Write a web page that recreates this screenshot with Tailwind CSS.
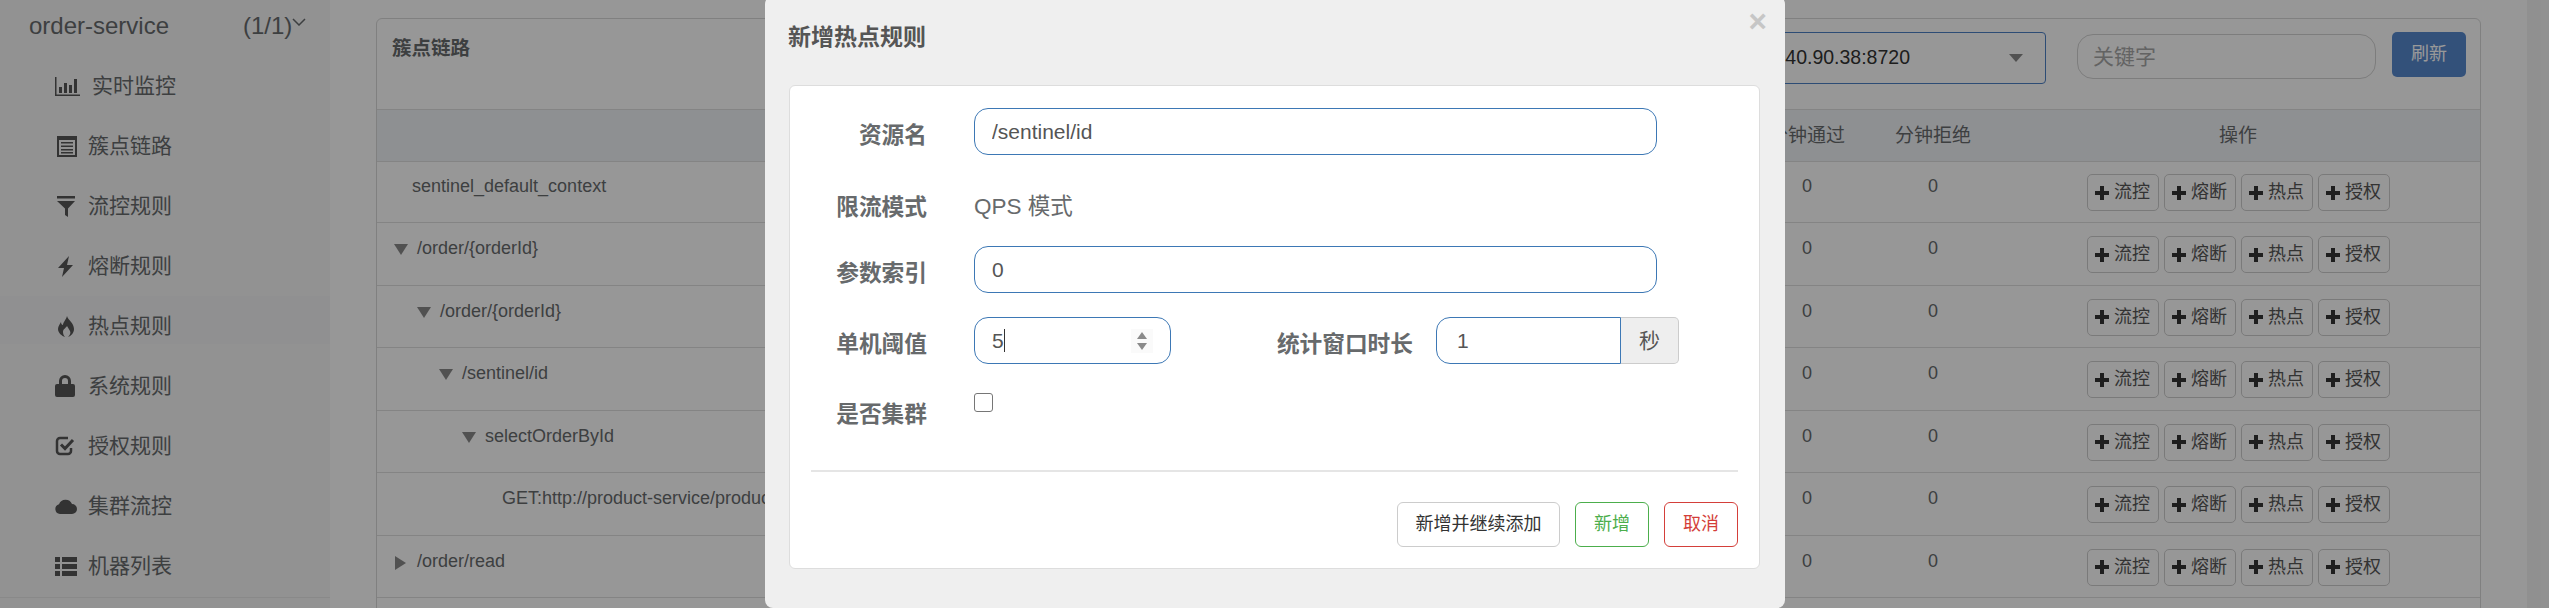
<!DOCTYPE html>
<html lang="zh-CN">
<head>
    <meta charset="UTF-8">
    <title>新增热点规则</title>
    <script src="https://cdn.jsdelivr.net/npm/@tailwindcss/browser@4"></script>
</head>
<body class="font-['Liberation_Sans','Noto_Sans_CJK_SC',sans-serif] text-[#676a6c]">
<div class="relative flex h-[608px] w-[2549px] overflow-hidden bg-[#fcfcfc]">

    <!-- Sidebar -->
    <aside class="h-[608px] w-[330px] shrink-0 bg-[#f3f3f4]">
        <div class="flex h-[56px] items-start pl-[29px] pt-[12px] text-[24px] leading-[28px]">
            <span class="w-[214px]">order-service</span>
            <span>(1/1)</span>
            <svg class="mt-[6px]" width="14" height="8" viewBox="0 0 14 8" fill="none" stroke="#676a6c" stroke-width="1.5"><path d="M1 1l6 6 6-6"/></svg>
        </div>
        <nav class="h-[542px] border-b border-[#e4e4e4] text-[21px] leading-[30px]">
            <a class="flex h-[60px] items-center pl-[55px]">
                <svg class="mr-[12px] text-[#555]" width="25" height="19" viewBox="0 0 25 19" fill="currentColor"><path d="M0 0h1.5v17.5H25V19H0z"/><path d="M4 10h3v6H4zM9 6h3v10H9zM14 8h3v8h-3zM19 2h3v14h-3z"/></svg>
                <span>实时监控</span>
            </a>
            <a class="flex h-[60px] items-center pl-[57px]">
                <svg class="mr-[11px] text-[#555]" width="20" height="21" viewBox="0 0 20 21" fill="currentColor"><path fill-rule="evenodd" d="M0 0h20v21H0zM2 4v15h16V4z"/><path d="M4 6h12v1.6H4zM4 9.5h12v1.6H4zM4 13h12v1.6H4zM4 16h12v1.4H4z"/></svg>
                <span>簇点链路</span>
            </a>
            <a class="flex h-[60px] items-center pl-[57px]">
                <svg class="mr-[13px] text-[#555]" width="18" height="21" viewBox="0 0 18 21" fill="currentColor"><path d="M0 0h18v2.5H0zM0 5h18l-7 7.5V21l-3-2v-6.5z"/></svg>
                <span>流控规则</span>
            </a>
            <a class="flex h-[60px] items-center pl-[58px]">
                <svg class="mr-[15px] text-[#555]" width="15" height="21" viewBox="0 0 15 21" fill="currentColor"><path d="M11 0L0 12h6L4 21 15 9H9z"/></svg>
                <span>熔断规则</span>
            </a>
            <a class="relative flex h-[60px] items-center pl-[57px]">
                <span class="absolute inset-x-0 bottom-[12px] top-0 bg-[#f1f1f2]"></span>
                <svg class="relative mr-[13px] text-[#555]" width="18" height="21" viewBox="0 0 18 21" fill="currentColor"><path d="M10 0c1 4 7 7 7 13 0 4-3 7-6 8 2-2 3-4 2-6-1-2-2-3-3-5-1 2-4 3-4 6 0 2 1 4 2 5-3-1-7-4-7-8 0-3 2-5 3-7 0 2 1 3 2 3 0-3 3-5 4-9z"/></svg>
                <span class="relative">热点规则</span>
            </a>
            <a class="flex h-[60px] items-center pl-[55px]">
                <svg class="mr-[13px] text-[#555]" width="20" height="22" viewBox="0 0 20 22" fill="currentColor"><path d="M2 9h2V6a6 6 0 0 1 12 0v3h2a2 2 0 0 1 2 2v9a2 2 0 0 1-2 2H2a2 2 0 0 1-2-2v-9a2 2 0 0 1 2-2zm5 0h6V6a3 3 0 0 0-6 0z"/></svg>
                <span>系统规则</span>
            </a>
            <a class="flex h-[60px] items-center pl-[55px]">
                <svg class="mr-[13px] text-[#555]" width="20" height="20" viewBox="0 0 20 20" fill="none" stroke="currentColor"><path stroke-width="2.5" d="M16 12v3a3 3 0 0 1-3 3H5a3 3 0 0 1-3-3V5a3 3 0 0 1 3-3h8"/><path stroke-width="3" d="M6 8.5l4 4 8-8.5"/></svg>
                <span>授权规则</span>
            </a>
            <a class="flex h-[60px] items-center pl-[55px]">
                <svg class="mr-[11px] text-[#555]" width="22" height="15" viewBox="0 0 22 15" fill="currentColor"><path d="M5 15a5 5 0 0 1-1-9.8A7 7 0 0 1 17 5a5 5 0 0 1 0 10z"/></svg>
                <span>集群流控</span>
            </a>
            <a class="flex h-[60px] items-center pl-[55px]">
                <svg class="mr-[11px] text-[#555]" width="22" height="19" viewBox="0 0 22 19" fill="currentColor"><path d="M0 0h5v5H0zM7 0h15v5H7zM0 7h5v5H0zM7 7h15v5H7zM0 14h5v5H0zM7 14h15v5H7z"/></svg>
                <span>机器列表</span>
            </a>
        </nav>
    </aside>

    <!-- Main content -->
    <main class="w-[2197px] px-[46px] pt-[18px]">
        <div class="h-[700px] rounded-t-[6px] border border-[#d6d6d6] bg-[#fcfcfc]">
            <div class="flex h-[90px] items-start pt-[13px]">
                <h2 class="ml-[15px] text-[19.5px] font-bold leading-[32px]">簇点链路</h2>
                <div class="ml-auto flex h-[52px] w-[420px] items-center justify-end rounded-[4px] border border-[#4b7fc4] bg-[#fcfcfc] pr-[22px] text-[19.5px] text-[#333]">
                    <span class="mr-[99px]">40.90.38:8720</span>
                    <svg width="14" height="8" viewBox="0 0 14 8" fill="#888"><path d="M0 0h14L7 8z"/></svg>
                </div>
                <input class="ml-[31px] mt-[2px] h-[45px] w-[299px] rounded-[16px] border border-[#d0d0d0] bg-transparent px-[15px] text-[21px] placeholder:text-[#a5a5a5]" placeholder="关键字">
                <button class="ml-[16px] h-[45px] w-[74px] rounded-[5px] bg-[#5688cc] text-[18px] text-white">刷新</button>
                <span class="w-[14px]"></span>
            </div>
            <div class="flex h-[53px] items-center border-y border-[#dcdcdc] bg-[#edf0f4] pt-[2px] text-[19px]">
                <div class="flex-1"></div>
                <div class="w-[126px] text-center">分钟通过</div>
                <div class="w-[126px] text-center">分钟拒绝</div>
                <div class="w-[484px] text-center">操作</div>
            </div>
            <div id="rows"></div>
        </div>
    </main>

    <div class="w-[22px] shrink-0 bg-[#f1f1f1]"></div>

    <!-- Backdrop -->
    <div class="absolute inset-0 bg-black/40"></div>

    <!-- Dialog -->
    <section class="absolute left-[765px] top-[-4px] h-[612px] w-[1020px] rounded-[8px] bg-[#efefef] pl-[24px] pt-[89px]">
        <h1 class="absolute left-[23px] top-[27px] text-[23px] font-bold leading-[28px] text-[#555]">新增热点规则</h1>
        <span class="absolute right-[18px] top-[5px] text-[31.5px] font-bold leading-[40px] text-[#c6c6c6]">×</span>

        <div class="h-[484px] w-[971px] rounded-[6px] border border-[#dddddd] bg-white pt-[22px]">
            <div class="mb-[26px] flex h-[47px] items-center">
                <label class="w-[137px] pt-[8px] text-right text-[22.7px] font-bold">资源名</label>
                <input class="ml-[47px] h-[47px] w-[683px] rounded-[14px] border border-[#3d78b5] px-[17px] text-[21px] text-[#555] outline-none" value="/sentinel/id">
            </div>
            <div class="mb-[18px] flex h-[47px] items-center pt-[5px]">
                <label class="w-[137px] text-right text-[22.7px] font-bold">限流模式</label>
                <span class="ml-[47px] text-[22.5px]">QPS 模式</span>
            </div>
            <div class="mb-[24px] flex h-[47px] items-center">
                <label class="w-[137px] pt-[8px] text-right text-[22.7px] font-bold">参数索引</label>
                <input class="ml-[47px] h-[47px] w-[683px] rounded-[14px] border border-[#3d78b5] px-[17px] text-[21px] text-[#555] outline-none" value="0">
            </div>
            <div class="mb-[23px] flex h-[47px] items-center">
                <label class="w-[137px] pt-[8px] text-right text-[22.7px] font-bold">单机阈值</label>
                <div class="relative ml-[47px]">
                    <input class="h-[47px] w-[197px] rounded-[14px] border border-[#3d78b5] px-[17px] text-[21px] text-[#555] outline-none" value="5">
                    <span class="absolute left-[30px] top-[12px] h-[23px] w-px bg-[#333]"></span>
                    <span class="absolute right-[18px] top-[12px] flex h-[24px] w-[22px] flex-col items-center justify-center gap-[4px] bg-[#fafafa]">
                        <svg width="10" height="7" viewBox="0 0 10 7" fill="#8a8a8a"><path d="M5 0l5 7H0z"/></svg>
                        <svg width="10" height="7" viewBox="0 0 10 7" fill="#8a8a8a"><path d="M0 0h10L5 7z"/></svg>
                    </span>
                </div>
                <label class="ml-[105px] w-[137px] whitespace-nowrap pt-[8px] text-right text-[22.7px] font-bold">统计窗口时长</label>
                <div class="ml-[23px] flex h-[47px]">
                    <input class="h-[47px] w-[185px] rounded-l-[14px] border border-[#3d78b5] px-[20px] text-[21px] text-[#555] outline-none" value="1">
                    <span class="flex w-[58px] items-center justify-center rounded-r-[5px] border border-l-0 border-[#cccccc] bg-[#eeeeee] text-[21px] text-[#555]">秒</span>
                </div>
            </div>
            <div class="flex h-[47px] items-center">
                <label class="w-[137px] pt-[8px] text-right text-[22.7px] font-bold">是否集群</label>
                <div class="mb-[16px] ml-[47px] h-[19px] w-[19px] rounded-[3px] border-[1.5px] border-[#767676] bg-white"></div>
            </div>
            <div class="ml-[21px] mt-[36px] h-[2px] w-[927px] bg-[#e5e5e5]"></div>
            <div class="mt-[30px] flex w-[948px] justify-end gap-[15px] text-[18px]">
                <button class="h-[45px] w-[163px] rounded-[6px] border border-[#cccccc] bg-white text-[#333]">新增并继续添加</button>
                <button class="h-[45px] w-[74px] rounded-[6px] border border-[#4cae4c] bg-white text-[#4cae4c]">新增</button>
                <button class="h-[45px] w-[74px] rounded-[6px] border border-[#d43f3a] bg-white text-[#d43f3a]">取消</button>
            </div>
        </div>
    </section>
</div>

<script>
    const down = '<svg class="mr-[9px] mt-[8px]" width="14" height="11" viewBox="0 0 14 11" fill="#888"><path d="M0 0h14L7 11z"/></svg>';
    const right = '<svg class="ml-[1px] mr-[11px] mt-[7px]" width="11" height="14" viewBox="0 0 11 14" fill="#888"><path d="M0 0l11 7-11 7z"/></svg>';
    const rows = [
        { name: 'sentinel_default_context', h: 'h-[61px] pt-[12px]', pad: 'pl-[35px]', icon: '' },
        { name: '/order/{orderId}', h: 'h-[62.5px] pt-[13px]', pad: 'pl-[17px]', icon: down },
        { name: '/order/{orderId}', h: 'h-[62.5px] pt-[13px]', pad: 'pl-[40px]', icon: down },
        { name: '/sentinel/id', h: 'h-[62.5px] pt-[13px]', pad: 'pl-[62px]', icon: down },
        { name: 'selectOrderById', h: 'h-[62.5px] pt-[13px]', pad: 'pl-[85px]', icon: down },
        { name: 'GET:http://product-service/product/{id}', h: 'h-[62.5px] pt-[13px]', pad: 'pl-[125px]', icon: '' },
        { name: '/order/read', h: 'h-[62.5px] pt-[13px]', pad: 'pl-[17px]', icon: right },
    ];
    const plus = '<svg class="mr-[5px] shrink-0" width="14" height="14" viewBox="0 0 14 14" fill="#333"><path d="M5 0h4v5h5v4H9v5H5V9H0V5h5z"/></svg>';
    const btn = (t) => `<button class="flex h-[37px] w-[72px] items-center justify-center rounded-[5px] border border-[#cccccc] bg-[#fcfcfc] text-[18px] text-[#555]">${plus}${t}</button>`;

    document.getElementById('rows').innerHTML = rows.map(r => `
        <div class="flex items-start border-b border-[#dcdcdc] text-[18px] leading-[25px] ${r.h}">
            <div class="flex flex-1 items-start overflow-hidden whitespace-nowrap ${r.pad}">${r.icon}<span>${r.name}</span></div>
            <div class="w-[126px] text-center">0</div>
            <div class="w-[126px] text-center">0</div>
            <div class="flex w-[484px] justify-center gap-[5px]">${btn('流控')}${btn('熔断')}${btn('热点')}${btn('授权')}</div>
        </div>`).join('');
</script>
</body>
</html>
